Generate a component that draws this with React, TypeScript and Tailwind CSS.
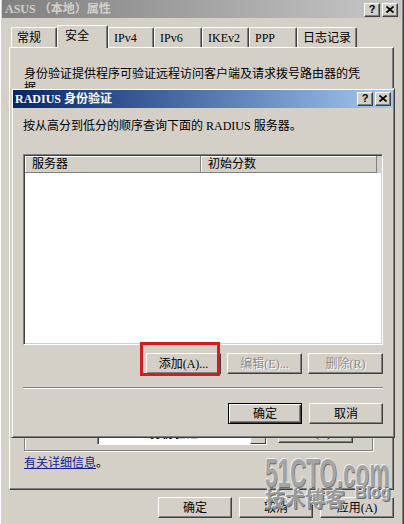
import React from 'react'

const FONT = "font-['Liberation_Serif','Noto_Sans_CJK_SC',serif]"

type BtnProps = {
  children: React.ReactNode
  w?: string
  disabled?: boolean
  isDefault?: boolean
}

// classic raised push button
function Btn({ children, w = 'w-[75px]', disabled, isDefault }: BtnProps) {
  const frame = isDefault
    ? 'border border-black shadow-[inset_1px_1px_0_#fff,inset_-1px_-1px_0_#404040,inset_-2px_-2px_0_#808080]'
    : 'border border-t-white border-l-white border-r-[#404040] border-b-[#404040] shadow-[inset_-1px_-1px_0_#808080]'
  return (
    <div
      className={`${w} h-[21px] shrink-0 flex items-center justify-center bg-[#d4d0c8] leading-[14px] ${frame} ${
        disabled ? 'text-[#8c8c8c] [text-shadow:1px_1px_0_#fff]' : 'text-black'
      }`}
    >
      {children}
    </div>
  )
}

function CaptionBtn({ kind }: { kind: 'help' | 'close' }) {
  return (
    <div className="w-[16px] h-[14px] flex items-center justify-center bg-[#d4d0c8] border border-t-white border-l-white border-r-[#404040] border-b-[#404040] shadow-[inset_-1px_-1px_0_#808080]">
      {kind === 'help' ? (
        <span className="font-['Liberation_Sans',sans-serif] font-bold text-[11px] leading-[11px] text-black -mt-[1px]">?</span>
      ) : (
        <svg width="8" height="7" viewBox="0 0 8 7" className="-mt-[1px]">
          <path d="M0.5 0.5 L7.5 6.5 M7.5 0.5 L0.5 6.5" stroke="#000" strokeWidth="1.7" />
        </svg>
      )}
    </div>
  )
}

const tabs = [
  { label: '常规', w: 'w-[46px]' },
  { label: '安全', w: 'w-[51px]', active: true },
  { label: 'IPv4', w: 'w-[46px]' },
  { label: 'IPv6', w: 'w-[48px]' },
  { label: 'IKEv2', w: 'w-[47px]' },
  { label: 'PPP', w: 'w-[48px]' },
  { label: '日志记录', w: 'w-[60px]' },
]

function RadiusDialog() {
  return (
    <div className="absolute left-[11px] top-[88px] w-[384px] h-[350px] z-10 flex flex-col bg-[#d4d0c8] border border-t-[#d4d0c8] border-l-[#d4d0c8] border-r-[#404040] border-b-[#404040] shadow-[inset_1px_1px_0_#fff,inset_-1px_-1px_0_#808080] p-[1px]">
      {/* title bar */}
      <div className="h-[18px] flex items-center justify-between bg-gradient-to-r from-[#0a246a] to-[#a6caf0] pl-[2px] pr-[2px]">
        <span className="text-white font-bold text-[12px] leading-[14px]">RADIUS 身份验证</span>
        <div className="flex gap-[2px]">
          <CaptionBtn kind="help" />
          <CaptionBtn kind="close" />
        </div>
      </div>

      <div className="flex flex-col px-[10px]">
        <p className="mt-[11px] text-[12px] leading-[14px] text-black">
          按从高分到低分的顺序查询下面的 RADIUS 服务器。
        </p>

        {/* server list */}
        <div className="mt-[21px] h-[191px] flex flex-col bg-white border border-t-[#808080] border-l-[#808080] border-r-white border-b-white shadow-[inset_1px_1px_0_#404040,inset_-1px_-1px_0_#d4d0c8] p-[1px]">
          <div className="flex h-[17px] bg-[#d4d0c8]">
            <div className="w-[176px] pl-[7px] flex items-center border-r border-b border-r-[#808080] border-b-[#808080] shadow-[inset_1px_1px_0_#fff] text-[12px] leading-[14px]">
              服务器
            </div>
            <div className="w-[176px] pl-[7px] flex items-center border-r border-b border-r-[#808080] border-b-[#808080] shadow-[inset_1px_1px_0_#fff] text-[12px] leading-[14px]">
              初始分数
            </div>
          </div>
          <div className="flex-1 bg-white" />
        </div>

        <div className="mt-[8px] flex justify-end gap-[6px] text-[12px]">
          <div className="relative">
            <Btn>添加(A)...</Btn>
            <div className="absolute -left-[6px] -top-[11px] w-[80px] h-[34px] border-[3px] border-[#d41c1c]" />
          </div>
          <Btn disabled>编辑(E)...</Btn>
          <Btn disabled>删除(R)</Btn>
        </div>

        <div className="mt-[13px] h-[2px] border-t border-t-[#808080] border-b border-b-white" />

        <div className="mt-[14px] flex justify-end gap-[7px] text-[12px]">
          <Btn w="w-[74px]" isDefault>确定</Btn>
          <Btn w="w-[74px]">取消</Btn>
        </div>
      </div>
    </div>
  )
}

function Watermark() {
  return (
    <div className="absolute left-[262px] top-[453px] w-[140px] h-[70px] z-20 pointer-events-none">
      <div className="absolute left-[3px] top-0 origin-left scale-x-[0.56] font-['Liberation_Sans',sans-serif] font-bold text-[40px] leading-[40px] whitespace-nowrap text-[#a4a4a4] [text-shadow:-1px_-1px_0_#f2f2f2,1px_1px_0_#6c6c6c]">
        51CTO.com
      </div>
      <div className="absolute left-[3px] top-[36px] font-['Noto_Sans_CJK_SC',sans-serif] font-bold text-[20px] leading-[20px] whitespace-nowrap text-[#9a9a9a] [text-shadow:-1px_-1px_0_#eeeeee,1px_1px_0_#6c6c6c]">
        技术博客
      </div>
      <div className="absolute left-[93px] top-[32px] font-['Liberation_Sans',sans-serif] font-bold text-[16px] leading-[16px] text-[#a0a0a0] [text-shadow:-1px_-1px_0_#eeeeee,1px_1px_0_#6c6c6c]">
        Blog
      </div>
    </div>
  )
}

export default function App() {
  return (
    <div
      className={`relative w-[404px] h-[524px] overflow-hidden bg-[#d4d0c8] flex flex-col text-[12px] text-black ${FONT} shadow-[inset_1px_0_0_#fff,inset_-1px_0_0_#404040,inset_-2px_0_0_#808080]`}
    >
      {/* inactive title bar */}
      <div className="ml-[2px] mr-[3px] h-[18px] shrink-0 flex items-center justify-between bg-gradient-to-r from-[#808080] to-[#c8c8c8] pl-[3px] pr-[3px]">
        <span className="font-bold text-[12px] leading-[14px] text-[#d4d0c8]">ASUS （本地）属性</span>
        <div className="flex gap-[2px] mt-[2px]">
          <CaptionBtn kind="help" />
          <CaptionBtn kind="close" />
        </div>
      </div>

      {/* tabs */}
      <div className="mt-[7px] ml-[11px] h-[22px] flex items-end shrink-0">
        {tabs.map((t) =>
          t.active ? (
            <div
              key={t.label}
              className={`${t.w} h-[23px] -mb-[1px] relative z-[1] pl-[7px] pt-[3px] bg-[#d4d0c8] rounded-t-[2px] border-l border-t border-r border-l-white border-t-white border-r-[#404040] shadow-[inset_-1px_0_0_#808080] leading-[14px]`}
            >
              {t.label}
            </div>
          ) : (
            <div
              key={t.label}
              className={`${t.w} h-[20px] pl-[5px] pt-[3px] rounded-t-[2px] border-l border-t border-r border-l-white border-t-white border-r-[#404040] shadow-[inset_-1px_0_0_#808080] leading-[14px]`}
            >
              {t.label}
            </div>
          )
        )}
      </div>

      {/* tab page */}
      <div className="ml-[9px] w-[385px] h-[443px] shrink-0 flex flex-col px-[14px] pt-[19px] pb-[19px] border border-t-white border-l-white border-r-[#404040] border-b-[#404040] shadow-[inset_-1px_-1px_0_#808080]">
        <p className="w-[340px] text-[12px] leading-[14px]">
          身份验证提供程序可验证远程访问客户端及请求拨号路由器的凭据。
        </p>
        <div className="flex-1" />
        <div className="w-[349px] h-[120px] flex items-end pb-[5px] border border-[#808080] shadow-[1px_1px_0_#fff,inset_1px_1px_0_#fff]">
          <div className="ml-[72px] w-[170px] h-[21px] flex bg-white border border-t-[#808080] border-l-[#808080] border-r-white border-b-white shadow-[inset_1px_1px_0_#404040]">
            <span className="flex-1 pl-[3px] pt-[2px] leading-[14px] font-bold">RADIUS 身份验证</span>
            <div className="w-[16px] bg-[#d4d0c8] border border-t-white border-l-white border-r-[#404040] border-b-[#404040]" />
          </div>
          <div className="ml-[11px] mb-[2px]">
            <Btn>配置(C)...</Btn>
          </div>
        </div>
        <div className="mt-[5px] leading-[14px]">
          <span className="text-[#14209c] underline">有关详细信息</span>。
        </div>
      </div>

      {/* dialog buttons */}
      <div className="mt-[7px] pr-[10px] flex justify-end gap-[7px]">
        <Btn w="w-[74px]">确定</Btn>
        <Btn w="w-[74px]">取消</Btn>
        <Btn w="w-[74px]">应用(A)</Btn>
      </div>

      <RadiusDialog />
      <Watermark />
    </div>
  )
}
